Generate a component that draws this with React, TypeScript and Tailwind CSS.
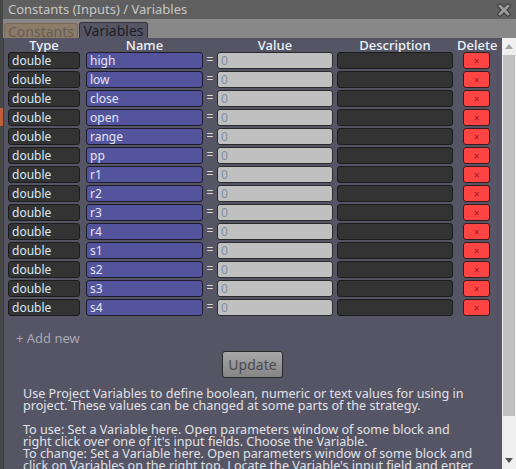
import React from "react";

const names = ["high","low","close","open","range","pp","r1","r2","r3","r4","s1","s2","s3","s4"];

const lines = [
  "Use Project Variables to define boolean, numeric or text values for using in",
  "project. These values can be changed at some parts of the strategy.",
  "",
  "To use: Set a Variable here. Open parameters window of some block and",
  "right click over one of it's input fields. Choose the Variable.",
  "To change: Set a Variable here. Open parameters window of some block and",
  "click on Variables on the right top. Locate the Variable's input field and enter",
];

export default function App() {
  return (
    <div className="w-[516px] h-[469px] flex bg-[#474747] overflow-hidden" style={{ fontFamily: '"Noto Sans", "Open Sans", sans-serif' }}>
      <div className="w-[3px] flex flex-col">
        <div className="h-[108px]" />
        <div className="h-[18px] bg-[#c0603a]" />
      </div>
      <div className="flex-1 flex flex-col">
        <div className="h-[19px] bg-[#5f5f5f] flex items-center justify-between pl-[5px] pr-[5px]">
          <span className="text-[13px] leading-[19px] text-[#c6c6c6]">Constants (Inputs) / Variables</span>
          <svg width="14" height="14" viewBox="0 0 14 14">
            <path d="M3 3 L11 11 M11 3 L3 11" stroke="#3a3a3a" strokeWidth="5" strokeLinecap="round" />
            <path d="M3 3 L11 11 M11 3 L3 11" stroke="#9a9a9a" strokeWidth="3" strokeLinecap="round" />
          </svg>
        </div>
        <div className="h-[19px] bg-[#888888] flex items-end pl-[1px] gap-[1px]">
          <div className="w-[74px] h-[15px] bg-[#8c7b69] rounded-t-[3px] border border-b-0 border-[#7a6a5a] flex items-center justify-center text-[14px] leading-[15px] text-[#665c52]">Constants</div>
          <div className="w-[69px] h-[16px] bg-[#555566] rounded-t-[3px] border border-b-0 border-[#333340] flex items-center justify-center text-[14px] leading-[16px] text-[#1c1c26]">Variables</div>
        </div>
        <div className="flex-1 flex min-h-0">
          <div className="flex-1 bg-[#555566] border-l border-[#3a3a44] pl-[4px] flex flex-col min-w-0">
            <div className="h-[14px] flex text-[13px] leading-[14px] text-[#eef2fa] font-medium">
              <div className="w-[72px] text-center">Type</div>
              <div className="w-[6px]" />
              <div className="w-[117px] text-center">Name</div>
              <div className="w-[14px]" />
              <div className="w-[116px] text-center">Value</div>
              <div className="w-[4px]" />
              <div className="w-[116px] text-center">Description</div>
              <div className="w-[4px]" />
              <div className="w-[40px] text-center">Delete</div>
            </div>
            <div className="flex flex-col gap-[2px]">
              {names.map((n) => (
                <div key={n} className="h-[17px] flex items-stretch text-[12px] leading-[15px]">
                  <div className="w-[72px] bg-[#333333] border border-[#1c1c1c] rounded-[3px] pl-[3px] text-[#d6ebf7]">double</div>
                  <div className="w-[6px]" />
                  <div className="w-[117px] bg-[#54549c] border border-[#1c1c2c] rounded-[3px] pl-[3px] text-[#e4e4f4]">{n}</div>
                  <div className="w-[14px] text-center text-[#d8d8d8]">=</div>
                  <div className="w-[116px] bg-[#c0c0c0] border border-[#2a2a2a] rounded-[3px] pl-[3px] text-[#7c90a8]">0</div>
                  <div className="w-[4px]" />
                  <div className="w-[116px] bg-[#333333] border border-[#1c1c1c] rounded-[3px]" />
                  <div className="w-[10px]" />
                  <div className="w-[27px] bg-[#ff4444] border border-[#3a1a1a] rounded-[3px] flex items-center justify-center text-[10px] leading-[10px] text-[#a01818]">×</div>
                </div>
              ))}
            </div>
            <div className="mt-[14px] pl-[8px] text-[13px] leading-[16px] text-[#a8a8b4]">+ Add new</div>
            <div className="mt-[5px] flex pl-[214px]">
              <div className="w-[61px] h-[27px] rounded-[3px] border border-[#2a2a2a] bg-gradient-to-b from-[#a8a8a8] to-[#858585] flex items-center justify-center text-[14px] text-[#4a4a52]">Update</div>
            </div>
            <div className="mt-[10px] pl-[15px] text-[12.6px] leading-[12px] text-[#e2e2e8]">
              {lines.map((l, i) => (
                <div key={i} className="h-[12px] whitespace-nowrap">{l}</div>
              ))}
            </div>
          </div>
          <div className="w-[14px] bg-[#f0f0f0] flex flex-col items-center">
            <div className="h-[17px] flex items-center justify-center">
              <svg width="8" height="5" viewBox="0 0 8 5"><path d="M0 5 L4 0 L8 5 Z" fill="#a3a3a3" /></svg>
            </div>
            <div className="w-[12px] h-[361px] bg-[#c1c1c1]" />
            <div className="flex-1" />
            <div className="h-[17px] flex items-center justify-center">
              <svg width="8" height="5" viewBox="0 0 8 5"><path d="M0 0 L4 5 L8 0 Z" fill="#505050" /></svg>
            </div>
          </div>
        </div>
      </div>
    </div>
  );
}
